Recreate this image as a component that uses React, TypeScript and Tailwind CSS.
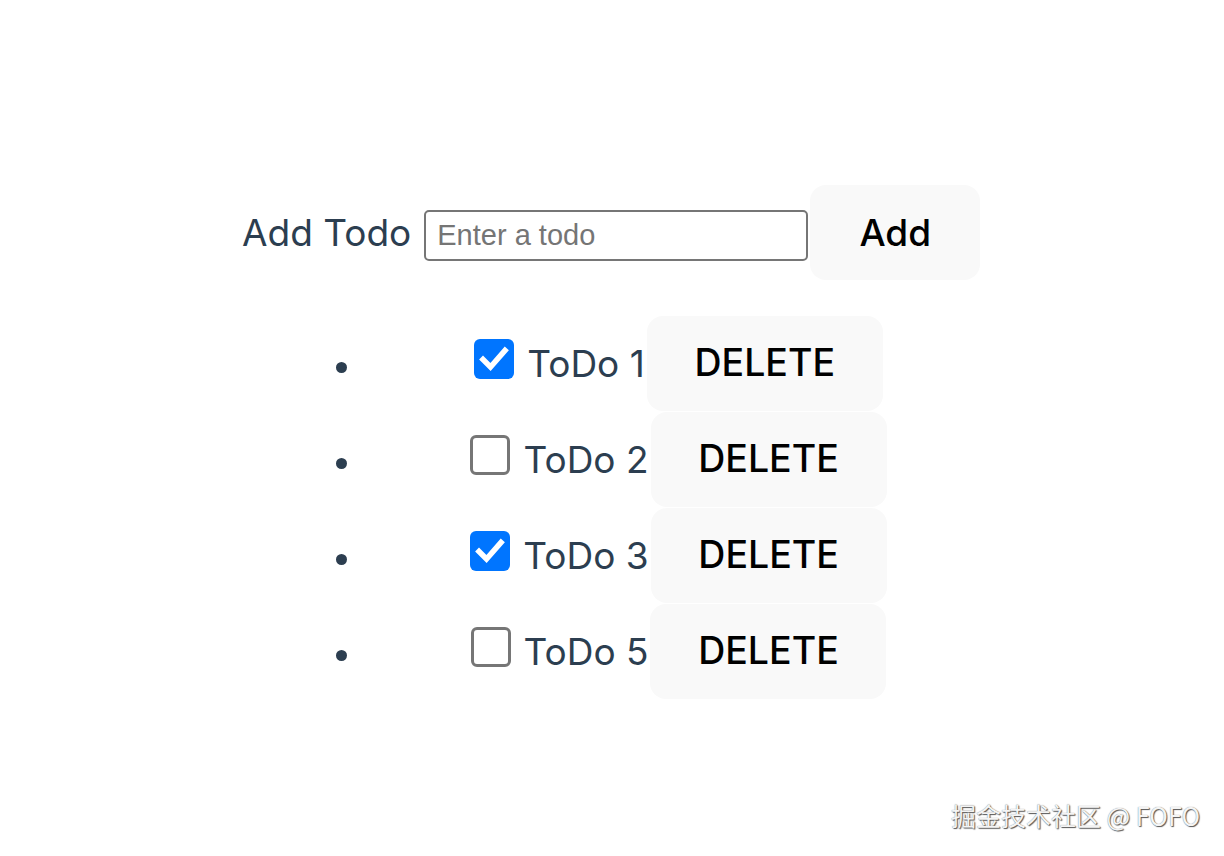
import { useState } from "react";

type Todo = { id: number; text: string; done: boolean };

function Check({ checked, onClick }: { checked: boolean; onClick: () => void }) {
  return (
    <span
      onClick={onClick}
      className={`mb-2 flex h-[40px] w-[40px] shrink-0 cursor-pointer items-center justify-center rounded-[6px] ${
        checked ? "bg-[#0075ff]" : "border-[3px] border-[#767676] bg-white"
      }`}
    >
      {checked && (
        <svg width="34" height="34" viewBox="0 0 34 34">
          <path d="M6 17.5 L13.5 25 L28 8.5" fill="none" stroke="white" strokeWidth="5.5" strokeLinecap="square" />
        </svg>
      )}
    </span>
  );
}

export default function App() {
  const [todos, setTodos] = useState<Todo[]>([
    { id: 1, text: "ToDo 1", done: true },
    { id: 2, text: "ToDo 2", done: false },
    { id: 3, text: "ToDo 3", done: true },
    { id: 5, text: "ToDo 5", done: false },
  ]);

  return (
    <div className="relative h-[856px] w-full bg-white font-['Inter',sans-serif] text-[#2c3e50]">
      <div className="mx-auto w-[740px] pt-[185px]">
        {/* Add row */}
        <div className="flex items-center">
          <label className="shrink-0 whitespace-nowrap text-[37px] leading-none">Add Todo</label>
          <input
            placeholder="Enter a todo"
            className="ml-[13px] mt-[6px] h-[51px] w-[384px] shrink-0 rounded-[5px] border-2 border-[#767676] px-[11px] font-['Liberation_Sans',Arial,sans-serif] text-[29px] text-black outline-none placeholder:text-[#757575]"
          />
          <button className="ml-[2px] h-[95px] w-[170px] shrink-0 rounded-[16px] bg-[#f9f9f9] text-[37px] font-medium text-black">
            Add
          </button>
        </div>

        {/* List */}
        <ul className="ml-[94px] mt-[35px] w-[674px]">
          {todos.map((t) => (
            <li key={t.id} className="flex h-[96px] items-center">
              <span className="mt-2 h-[11px] w-[11px] shrink-0 rounded-full bg-[#2c3e50]" />
              <div className="flex flex-1 items-center justify-center">
                <Check
                  checked={t.done}
                  onClick={() =>
                    setTodos(todos.map((x) => (x.id === t.id ? { ...x, done: !x.done } : x)))
                  }
                />
                <span className="ml-[13px] whitespace-nowrap text-[37px] leading-none">{t.text}</span>
                <button
                  onClick={() => setTodos(todos.filter((x) => x.id !== t.id))}
                  className="ml-[2px] h-[95px] w-[236px] shrink-0 rounded-[16px] bg-[#f9f9f9] text-[37.5px] font-medium text-black"
                >
                  DELETE
                </button>
              </div>
            </li>
          ))}
        </ul>
      </div>

      {/* watermark */}
      <div className="absolute bottom-[22px] right-[24px] font-['Noto_Sans_CJK_SC','Noto_Sans',sans-serif] text-[25px] text-[#f4f4f4] [text-shadow:1px_1px_1px_#555,0_0_1px_#777]">
        掘金技术社区 @ FOFO
      </div>
    </div>
  );
}
